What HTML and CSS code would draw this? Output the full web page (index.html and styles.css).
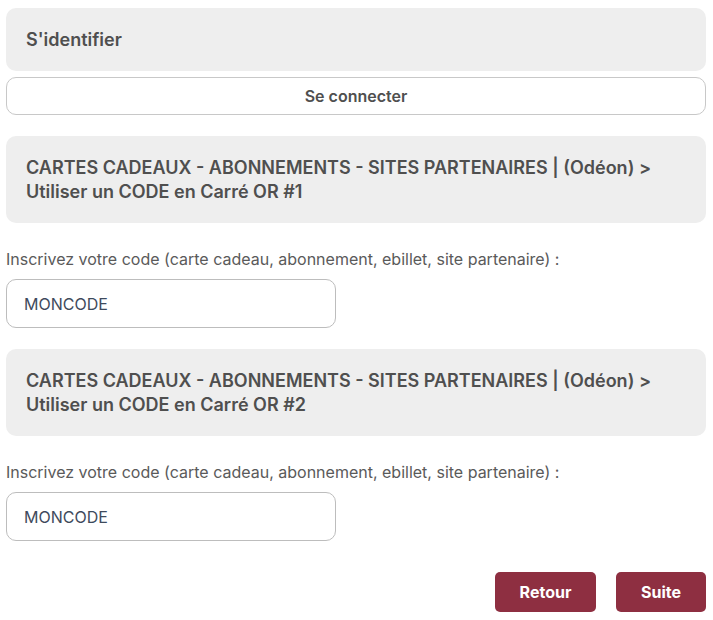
FILE: index.html
```html
<!DOCTYPE html>
<html lang="fr">
<head>
<meta charset="utf-8">
<link rel="stylesheet" href="styles.css">
</head>
<body>
<div class="page">
  <div class="panel"><h2 class="panel-title">S'identifier</h2></div>
  <button class="btn-outline">Se connecter</button>

  <div class="panel panel-lg"><h2 class="panel-title">CARTES CADEAUX - ABONNEMENTS - SITES PARTENAIRES | (Odéon) &gt;<br>Utiliser un CODE en Carré OR #1</h2></div>
  <div class="field">
    <label class="field-label">Inscrivez votre code (carte cadeau, abonnement, ebillet, site partenaire) :</label>
    <input class="field-input" type="text" placeholder="MONCODE">
  </div>

  <div class="panel panel-lg"><h2 class="panel-title">CARTES CADEAUX - ABONNEMENTS - SITES PARTENAIRES | (Odéon) &gt;<br>Utiliser un CODE en Carré OR #2</h2></div>
  <div class="field">
    <label class="field-label">Inscrivez votre code (carte cadeau, abonnement, ebillet, site partenaire) :</label>
    <input class="field-input" type="text" placeholder="MONCODE">
  </div>

  <div class="actions">
    <button class="btn-primary btn-back">Retour</button>
    <button class="btn-primary btn-next">Suite</button>
  </div>
</div>
</body>
</html>
```

FILE: styles.css
```css
* { box-sizing: border-box; }
html, body { margin: 0; padding: 0; background: #fff; }
body { font-family: Inter, "Noto Sans", "Liberation Sans", sans-serif; color: #555; }
.page {
  padding: 8px 7px 0 6px;
  display: flex;
  flex-direction: column;
}
.panel {
  background: #eeeeee;
  border-radius: 10px;
  padding: 20px 20px 19px;
}
.panel-title {
  margin: 0;
  font-size: 18px;
  font-weight: 600;
  line-height: 24px;
  color: #4f4f4f;
}
.btn-outline {
  margin-top: 6px;
  height: 38px;
  background: #fff;
  border: 1px solid #c8c8c8;
  border-radius: 10px;
  font-family: inherit;
  font-size: 16px;
  font-weight: 600;
  color: #4f4f4f;
  margin-bottom: 21px;
}
.field {
  display: flex;
  flex-direction: column;
  align-items: flex-start;
  padding-top: 25px;
  margin-bottom: 21px;
}
.field-label {
  font-size: 16px;
  line-height: 22px;
  color: #5a5a5a;
  margin-bottom: 9px;
}
.field-input {
  width: 330px;
  height: 49px;
  border: 1px solid #bdbdbd;
  border-radius: 10px;
  padding: 0 17px;
  font-family: inherit;
  font-size: 16px;
  color: #3e4a5c;
  outline: none;
}
.field-input::placeholder { color: #3e4a5c; opacity: 1; }
.actions {
  display: flex;
  justify-content: flex-end;
  gap: 20px;
  margin-top: 10px;
}
.btn-primary {
  height: 40px;
  background: #8e2f41;
  color: #fff;
  border: none;
  border-radius: 5px;
  font-family: inherit;
  font-size: 16px;
  font-weight: 700;
}
.btn-back { width: 101px; }
.btn-next { width: 90px; }
```
